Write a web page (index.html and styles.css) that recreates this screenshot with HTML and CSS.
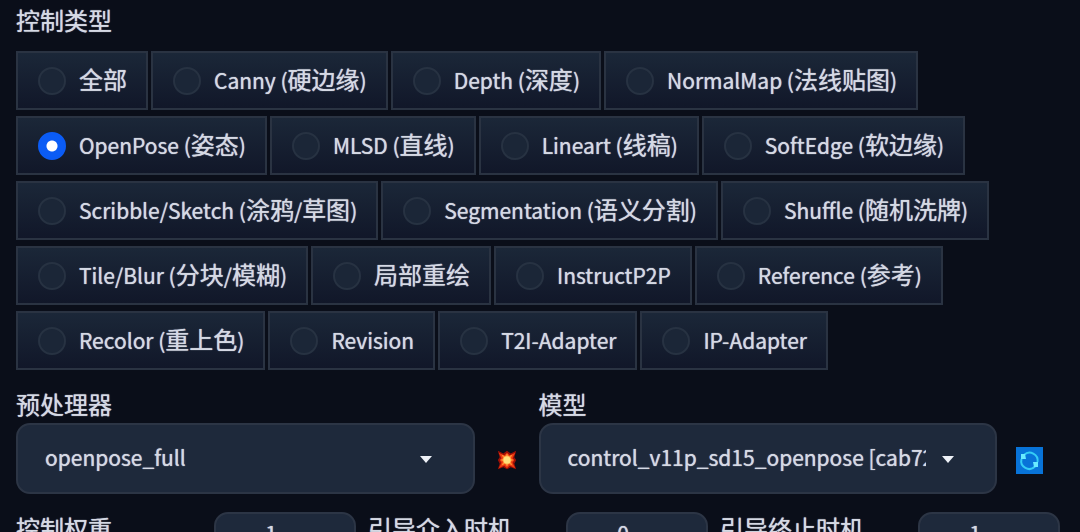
FILE: index.html
```html
<!DOCTYPE html>
<html lang="zh-CN">
<head>
<meta charset="utf-8">
<title>ControlNet</title>
<link rel="stylesheet" href="styles.css">
</head>
<body>
<main class="panel">
  <fieldset class="types">
    <legend class="caption">控制类型</legend>
    <div class="options">
      <label class="option"><input type="radio" name="type"><span><b>全部</b></span></label>
      <label class="option"><input type="radio" name="type"><span>Canny (<b>硬边缘</b>)</span></label>
      <label class="option"><input type="radio" name="type"><span>Depth (<b>深度</b>)</span></label>
      <label class="option"><input type="radio" name="type"><span>NormalMap (<b>法线贴图</b>)</span></label>
      <label class="option"><input type="radio" name="type" checked><span>OpenPose (<b>姿态</b>)</span></label>
      <label class="option"><input type="radio" name="type"><span>MLSD (<b>直线</b>)</span></label>
      <label class="option"><input type="radio" name="type"><span>Lineart (<b>线稿</b>)</span></label>
      <label class="option"><input type="radio" name="type"><span>SoftEdge (<b>软边缘</b>)</span></label>
      <label class="option"><input type="radio" name="type"><span>Scribble/Sketch (<b>涂鸦</b>/<b>草图</b>)</span></label>
      <label class="option"><input type="radio" name="type"><span>Segmentation (<b>语义分割</b>)</span></label>
      <label class="option"><input type="radio" name="type"><span>Shuffle (<b>随机洗牌</b>)</span></label>
      <label class="option"><input type="radio" name="type"><span>Tile/Blur (<b>分块</b>/<b>模糊</b>)</span></label>
      <label class="option"><input type="radio" name="type"><span><b>局部重绘</b></span></label>
      <label class="option"><input type="radio" name="type"><span>InstructP2P</span></label>
      <label class="option"><input type="radio" name="type"><span>Reference (<b>参考</b>)</span></label>
      <label class="option"><input type="radio" name="type"><span>Recolor (<b>重上色</b>)</span></label>
      <label class="option"><input type="radio" name="type"><span>Revision</span></label>
      <label class="option"><input type="radio" name="type"><span>T2I-Adapter</span></label>
      <label class="option"><input type="radio" name="type"><span>IP-Adapter</span></label>
    </div>
  </fieldset>

  <div class="models">
    <div class="field">
      <label class="caption" for="preprocessor">预处理器</label>
      <div class="line">
        <div class="dropdown">
          <select id="preprocessor"><option>openpose_full</option></select>
          <svg class="arrow" viewBox="0 0 12 7" aria-hidden="true"><path d="M0 0H12L6 7Z"/></svg>
        </div>
        <button class="tool" type="button" aria-label="运行预处理器">
          <svg class="burst" viewBox="0 0 24 24" aria-hidden="true">
            <path fill="#9c1006" d="M2 2l6 3 4-3 4 3 6-3-2 7 2 3-2 4 2 6-6-2-4 2-4-2-6 2 2-6-2-4 2-3z"/>
            <path fill="#f03a12" d="M3 4l6 3 3-3 3 3 6-3-3 6 2 2-2 3 3 6-6-3-3 3-3-3-6 3 3-6-2-3 2-2z"/>
            <path fill="#ff8f32" d="M6 6l4 2 2-3 2 3 4-2-2 4 3 2-3 2 2 4-4-2-2 3-2-3-4 2 2-4-3-2 3-2z"/>
            <circle cx="12" cy="12" r="4" fill="#ffe07a"/>
          </svg>
        </button>
      </div>
    </div>
    <div class="field">
      <label class="caption" for="model">模型</label>
      <div class="line">
        <div class="dropdown">
          <select id="model"><option>control_v11p_sd15_openpose [cab727d4]</option></select>
          <svg class="arrow" viewBox="0 0 12 7" aria-hidden="true"><path d="M0 0H12L6 7Z"/></svg>
        </div>
        <button class="tool" type="button" aria-label="刷新模型">
          <svg class="refresh" viewBox="0 0 27 27" aria-hidden="true">
            <path fill="#0873d8" d="M0 0h27v27H0z"/>
            <path fill="none" stroke="#35cdf5" stroke-width="2" d="M8 8A8 8 0 0 1 21.500 15M19 19.500A8 8 0 0 1 5.500 12"/>
            <path fill="#6aeaff" d="M5 7v5h5l-1-5zM22 20v-5h-5l1 5z"/>
          </svg>
        </button>
      </div>
    </div>
  </div>

  <div class="sliders">
    <div class="slider"><label class="caption" for="weight">控制权重</label><input id="weight" type="text" inputmode="decimal" value="1"></div>
    <div class="slider"><label class="caption" for="start">引导介入时机</label><input id="start" type="text" inputmode="decimal" value="0"></div>
    <div class="slider"><label class="caption" for="end">引导终止时机</label><input id="end" type="text" inputmode="decimal" value="1"></div>
  </div>
</main>
</body>
</html>
```

FILE: styles.css
```css
* { box-sizing: border-box; }

body {
  margin: 0;
  overflow: hidden;
  background: #0a0e19;
  color: #d5d9e4;
  font: 400 21px/32px "Noto Sans CJK SC", sans-serif;
  text-shadow: 0 0 1px #d5d9e4;
}

.panel { padding: 4px 16px 0; }

.types { margin: 0; padding: 0; border: 0; min-width: 0; }

.caption {
  padding: 0;
  font-size: 24px;
  white-space: nowrap;
}

.options {
  display: flex;
  flex-wrap: wrap;
  gap: 6px 3px;
  padding-top: 15px;
}

.option {
  display: flex;
  align-items: center;
  gap: 13px;
  height: 59px;
  padding: 0 19px 0 20px;
  border: 2px solid #2a3342;
  background: linear-gradient(#1b2738, #111729);
  white-space: nowrap;
}

.option span { padding-bottom: 2px; }

.option b { font-size: 24px; font-weight: 400; }

.option input {
  appearance: none;
  flex: none;
  width: 28px;
  height: 28px;
  margin: 0;
  border: 2px solid #273242;
  border-radius: 50%;
  background: #1b2637;
}

.option input:checked {
  border-color: #0b5cf5;
  background: radial-gradient(circle, #fff 5px, #0b5cf5 6px);
}

.models {
  display: grid;
  grid-template-columns: 1fr 1fr;
  padding-top: 18px;
  margin-right: 3px;
}

.field { display: flex; flex-direction: column; gap: 3px; min-width: 0; }

.line { display: flex; align-items: center; }

.dropdown { position: relative; flex: 1; min-width: 0; }

.dropdown select {
  appearance: none;
  display: block;
  width: 100%;
  height: 71px;
  padding: 0 69px 4px 27px;
  border: 2px solid #2c3545;
  border-radius: 14px;
  background: #1e293b;
  color: inherit;
  font: inherit;
  text-shadow: inherit;
  overflow: hidden;
}

.arrow {
  position: absolute;
  right: 43px;
  top: 33px;
  width: 12px;
  height: 7px;
  fill: #eef1f7;
  pointer-events: none;
}

.tool {
  display: flex;
  justify-content: center;
  align-items: center;
  width: 64px;
  height: 71px;
  padding: 3px 0 0;
  border: 0;
  background: none;
}

.burst { width: 22px; height: 22px; }
.refresh { width: 27px; height: 27px; }

.sliders {
  display: grid;
  grid-template-columns: repeat(3, 1fr);
  gap: 12px;
  padding-top: 18px;
  margin-right: 4px;
}

.slider {
  display: flex;
  justify-content: space-between;
  align-items: flex-start;
}

.slider input {
  width: 142px;
  height: 44px;
  padding: 0 32px 2px 4px;
  border: 2px solid #2c3545;
  border-radius: 14px;
  background: #1e293b;
  color: inherit;
  font: inherit;
  text-shadow: inherit;
  text-align: center;
}
```
